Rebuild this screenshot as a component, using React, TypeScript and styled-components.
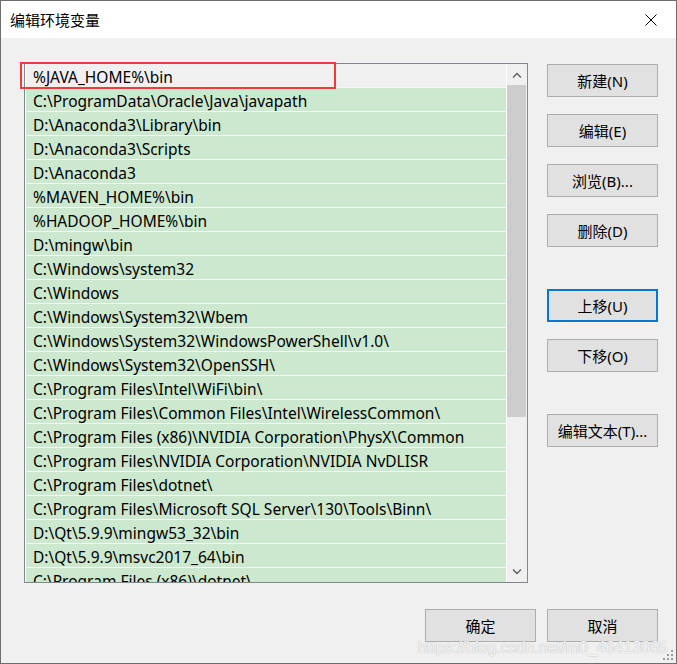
import React from 'react'
import styled, { createGlobalStyle } from 'styled-components'

const GlobalStyle = createGlobalStyle`
  html, body {
    margin: 0;
    padding: 0;
    background: #f0f0f0;
  }
  * { box-sizing: border-box; }
`

const UI_FONT = `"Noto Sans", "Noto Sans CJK SC", sans-serif`

const Window = styled.div`
  position: relative;
  width: 677px;
  height: 664px;
  border: 1px solid #6e6e6e;
  background: #f0f0f0;
  display: flex;
  flex-direction: column;
  font-family: ${UI_FONT};
  overflow: hidden;
`

const TitleBar = styled.div`
  height: 37px;
  background: #ffffff;
  display: flex;
  align-items: center;
  justify-content: space-between;
  padding: 0 0 0 9px;
  flex-shrink: 0;
`

const Title = styled.span`
  font-size: 15px;
  color: #000;
  font-family: "Noto Sans CJK SC", sans-serif;
`

const CloseBox = styled.div`
  width: 46px;
  height: 37px;
  display: flex;
  align-items: center;
  justify-content: center;
  margin-right: 2px;
`

const Body = styled.div`
  flex: 1;
  display: flex;
  flex-direction: column;
  padding: 25px 18px 21px 23px;
`

const Main = styled.div`
  display: flex;
  gap: 19px;
`

const ListBox = styled.div`
  position: relative;
  width: 504px;
  height: 520px;
  border: 1px solid #828790;
  background: #ffffff;
  display: flex;
  overflow: hidden;
`

const Rows = styled.div`
  flex: 1;
  padding-left: 1px;
  overflow: hidden;
`

const Row = styled.div<{ $current?: boolean }>`
  height: 24px;
  line-height: 27px;
  padding-left: 7px;
  border-bottom: 1px solid #f4f8f4;
  background: ${p => (p.$current ? '#f0f0f0' : '#cce8cf')};
  font-size: 15.5px;
  color: #000;
  white-space: nowrap;
`

const ScrollBar = styled.div`
  width: 21px;
  border-left: 1px solid #ffffff;
  background: #f0f0f0;
  display: flex;
  flex-direction: column;
`

const ScrollArrow = styled.div`
  height: 21px;
  display: flex;
  align-items: center;
  justify-content: center;
`

const Track = styled.div`
  flex: 1;
  display: flex;
  flex-direction: column;
`

const Thumb = styled.div`
  height: 332px;
  margin: 0 1px 0 0;
  background: #cdcdcd;
`

const Highlight = styled.div`
  position: absolute;
  left: 19px;
  top: 61px;
  width: 316px;
  height: 27px;
  border: 2px solid #ee3b3b;
  pointer-events: none;
`

const Side = styled.div`
  display: flex;
  flex-direction: column;
  padding-top: 1px;
`

const Button = styled.div<{ $focused?: boolean; $gap?: number }>`
  width: 111px;
  height: 33px;
  margin-top: ${p => p.$gap ?? 0}px;
  background: #e1e1e1;
  border: ${p => (p.$focused ? '2px solid #0078d7' : '1px solid #adadad')};
  display: flex;
  align-items: center;
  justify-content: center;
  font-size: 15px;
  color: #000;
  font-family: "Noto Sans", "Noto Sans CJK SC", sans-serif;
`

const Footer = styled.div`
  margin-top: auto;
  display: flex;
  justify-content: flex-end;
  gap: 11px;
`

const Watermark = styled.div`
  position: absolute;
  right: 8px;
  bottom: 6px;
  font-family: "Liberation Sans", Arial, sans-serif;
  font-size: 16px;
  color: rgba(255, 255, 255, 0.85);
  text-shadow: 0 0 1px #b8b8b8, 0 0 1px #c8c8c8;
  pointer-events: none;
`

const Grip = styled.svg`
  position: absolute;
  right: 2px;
  bottom: 2px;
`

const paths = [
  '%JAVA_HOME%\\bin',
  'C:\\ProgramData\\Oracle\\Java\\javapath',
  'D:\\Anaconda3\\Library\\bin',
  'D:\\Anaconda3\\Scripts',
  'D:\\Anaconda3',
  '%MAVEN_HOME%\\bin',
  '%HADOOP_HOME%\\bin',
  'D:\\mingw\\bin',
  'C:\\Windows\\system32',
  'C:\\Windows',
  'C:\\Windows\\System32\\Wbem',
  'C:\\Windows\\System32\\WindowsPowerShell\\v1.0\\',
  'C:\\Windows\\System32\\OpenSSH\\',
  'C:\\Program Files\\Intel\\WiFi\\bin\\',
  'C:\\Program Files\\Common Files\\Intel\\WirelessCommon\\',
  'C:\\Program Files (x86)\\NVIDIA Corporation\\PhysX\\Common',
  'C:\\Program Files\\NVIDIA Corporation\\NVIDIA NvDLISR',
  'C:\\Program Files\\dotnet\\',
  'C:\\Program Files\\Microsoft SQL Server\\130\\Tools\\Binn\\',
  'D:\\Qt\\5.9.9\\mingw53_32\\bin',
  'D:\\Qt\\5.9.9\\msvc2017_64\\bin',
  'C:\\Program Files (x86)\\dotnet\\',
]

const sideButtons = [
  { label: '新建(N)', gap: 0 },
  { label: '编辑(E)', gap: 17 },
  { label: '浏览(B)...', gap: 17 },
  { label: '删除(D)', gap: 17 },
  { label: '上移(U)', gap: 42, focused: true },
  { label: '下移(O)', gap: 17 },
  { label: '编辑文本(T)...', gap: 42 },
]

export default function App() {
  return (
    <>
      <GlobalStyle />
      <Window>
        <TitleBar>
          <Title>编辑环境变量</Title>
          <CloseBox>
            <svg width="12" height="12" viewBox="0 0 12 12">
              <path d="M0.5 0.5 L11.5 11.5 M11.5 0.5 L0.5 11.5" stroke="#000" strokeWidth="1" fill="none" />
            </svg>
          </CloseBox>
        </TitleBar>
        <Body>
          <Main>
            <ListBox>
              <Rows>
                {paths.map((p, i) => (
                  <Row key={i} $current={i === 0}>{p}</Row>
                ))}
              </Rows>
              <ScrollBar>
                <ScrollArrow>
                  <svg width="10" height="6" viewBox="0 0 10 6">
                    <path d="M1 5.5 L5 1.5 L9 5.5" stroke="#606060" strokeWidth="1.4" fill="none" />
                  </svg>
                </ScrollArrow>
                <Track>
                  <Thumb />
                </Track>
                <ScrollArrow>
                  <svg width="10" height="6" viewBox="0 0 10 6">
                    <path d="M1 0.5 L5 4.5 L9 0.5" stroke="#606060" strokeWidth="1.4" fill="none" />
                  </svg>
                </ScrollArrow>
              </ScrollBar>
            </ListBox>
            <Side>
              {sideButtons.map(b => (
                <Button key={b.label} $gap={b.gap} $focused={b.focused}>{b.label}</Button>
              ))}
            </Side>
          </Main>
          <Footer>
            <Button>确定</Button>
            <Button>取消</Button>
          </Footer>
        </Body>
        <Highlight />
        <Watermark>https://blog.csdn.net/m0_46413065</Watermark>
        <Grip width="11" height="11" viewBox="0 0 11 11">
          <g fill="#9a9a9a">
            <rect x="8" y="0" width="2" height="2" />
            <rect x="4" y="4" width="2" height="2" />
            <rect x="8" y="4" width="2" height="2" />
            <rect x="0" y="8" width="2" height="2" />
            <rect x="4" y="8" width="2" height="2" />
            <rect x="8" y="8" width="2" height="2" />
          </g>
        </Grip>
      </Window>
    </>
  )
}
